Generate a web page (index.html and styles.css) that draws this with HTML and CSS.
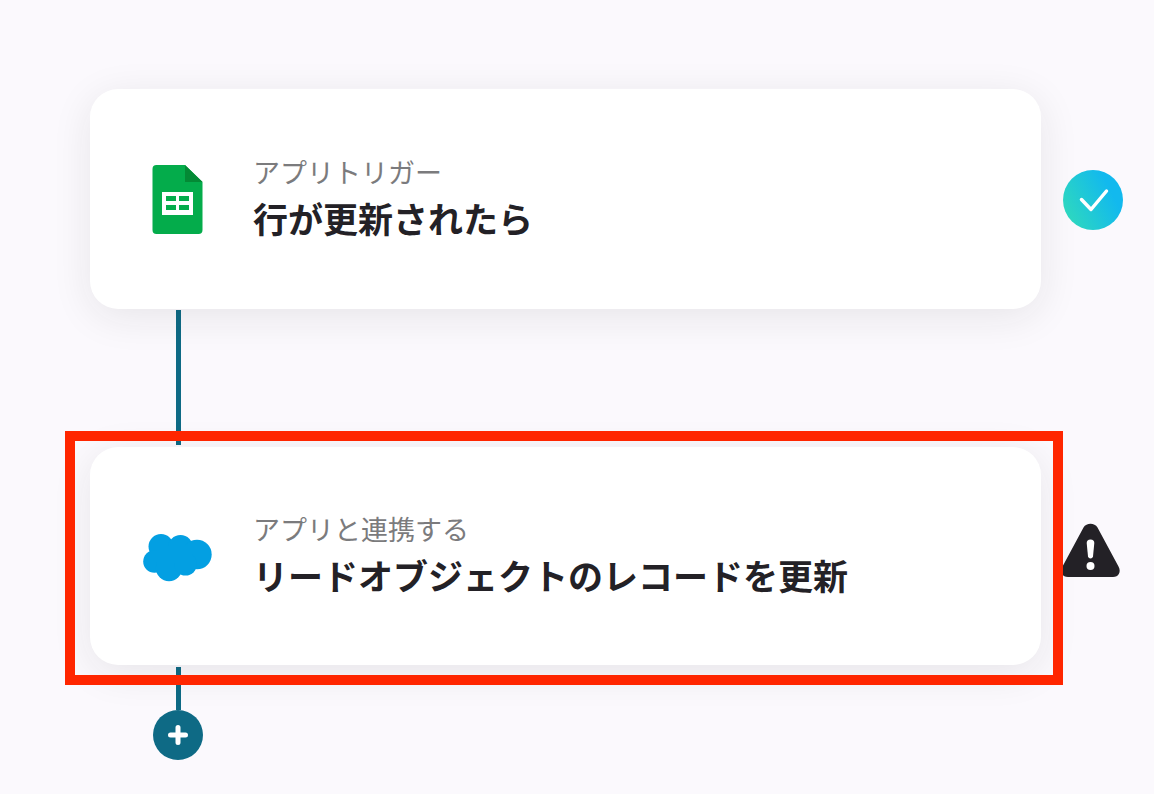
FILE: index.html
```html
<!DOCTYPE html>
<html lang="ja">
<head>
<meta charset="utf-8">
<title>アプリトリガー</title>
<link rel="stylesheet" href="styles.css">
</head>
<body>
<main class="flow">
  <section class="step">
    <article class="card trigger">
      <svg class="app-icon" viewBox="0 -1 70 70" aria-hidden="true">
        <path fill="#04ac4b" d="M14 0H43L60.500 17V65Q60.500 69 56.500 69H14.500Q10.500 69 10.500 65V4Q10.500 0 14.500 0Z"/>
        <path fill="#048a35" d="M43 0L60.500 17H43Z"/>
        <path fill="#fff" fill-rule="evenodd" d="M20 27H51V50H20ZM24 31V36H34V31ZM37 31V36H47V31ZM24 40V45H34V40ZM37 40V45H47V40Z"/>
      </svg>
      <div class="text">
        <p class="kind">アプリトリガー</p>
        <h2 class="title">行が更新されたら</h2>
      </div>
    </article>
    <svg class="status" viewBox="0 -1 60 60" role="img" aria-label="完了">
      <defs>
        <linearGradient id="done" x1="0" y1=".75" x2="1" y2=".25">
          <stop offset="0" stop-color="#2fd9bd"/>
          <stop offset=".8" stop-color="#12b9ee"/>
        </linearGradient>
      </defs>
      <circle cx="30" cy="30" r="30" fill="url(#done)"/>
      <path d="M18.500 29.500L28 39.500L43.500 21" fill="none" stroke="#fff" stroke-width="3.500" stroke-linecap="round" stroke-linejoin="round"/>
    </svg>
  </section>
  <div class="connector"></div>
  <section class="step selected">
    <article class="card">
      <svg class="app-icon" viewBox="0 0 70 70" aria-hidden="true">
        <g fill="#039fe2">
          <circle cx="19" cy="25.500" r="12.500"/>
          <circle cx="38.500" cy="26.500" r="12.500"/>
          <circle cx="55" cy="33.500" r="14.700"/>
          <circle cx="12.500" cy="40.500" r="11.300"/>
          <circle cx="27" cy="47" r="13.200"/>
          <circle cx="43.500" cy="43" r="11.500"/>
          <path d="M15 25H50V42H15Z"/>
        </g>
      </svg>
      <div class="text">
        <p class="kind">アプリと連携する</p>
        <h2 class="title">リードオブジェクトのレコードを更新</h2>
      </div>
    </article>
    <svg class="status" viewBox="0 1 60 60" role="img" aria-label="警告">
      <path d="M20.500 2.500C23.500 -2.500 31.500 -2.500 34.500 2.500L55.500 41.500C58.500 47 55.500 52 50 52H5C-.500 52 -3.500 47 -.500 41.500Z" fill="#232126"/>
      <path d="M23.700 18Q23.700 14.500 27.500 14.500T31.300 18L30 31.500Q29.500 33.500 27.500 33.500T25 31.500Z" fill="#fff"/>
      <circle cx="27.500" cy="41" r="4" fill="#fff"/>
    </svg>
  </section>
  <div class="connector short"></div>
  <button class="add" type="button" aria-label="ステップを追加">
    <svg viewBox="0 0 50 50" aria-hidden="true">
      <path d="M25 17.500V32.500M17.500 25H32.500" stroke="#fff" stroke-width="5" stroke-linecap="round"/>
    </svg>
  </button>
</main>
</body>
</html>
```
FILE: styles.css
```css
* {
  box-sizing: border-box;
}

body {
  margin: 0;
  background: #fbf9fd;
  color: #232126;
  font-family: "Noto Sans CJK JP", sans-serif;
}

.flow {
  padding: 89px 31px 32px 90px;
}

.step {
  position: relative;
  display: flex;
  align-items: center;
  gap: 22px;
}

.card {
  flex: 1;
  min-width: 0;
  display: flex;
  align-items: center;
  gap: 41px;
  padding: 60px 52px;
  min-height: 218px;
  background: #fff;
  border-radius: 28px;
  box-shadow: 0 8px 40px rgba(35, 33, 38, .09);
}

.trigger {
  min-height: 220px;
}

.app-icon {
  flex: none;
  width: 70px;
  height: 70px;
}

.text {
  min-width: 0;
  padding-bottom: 3px;
}

.kind,
.title {
  margin: 0;
}

.kind {
  color: #7b7b7d;
  font-size: 27px;
  font-weight: 400;
  line-height: 40px;
}

.title {
  font-size: 35px;
  font-weight: 700;
  line-height: 52px;
}

.status {
  flex: none;
  width: 60px;
  height: 60px;
  overflow: visible;
}

.selected::after {
  content: "";
  position: absolute;
  inset: -16px 60px -20px -25px;
  border: 10px solid #ff2600;
  pointer-events: none;
}

.connector {
  width: 5px;
  height: 135px;
  margin: 1px 0 2px 86px;
  background: #0e6a85;
}

.connector.short {
  height: 43px;
  margin-top: 2px;
  margin-bottom: 0;
}

.add {
  display: block;
  width: 50px;
  height: 50px;
  margin-left: 63px;
  padding: 0;
  border: 0;
  border-radius: 50%;
  background: #0e6a85;
}

.add svg {
  display: block;
}
```
